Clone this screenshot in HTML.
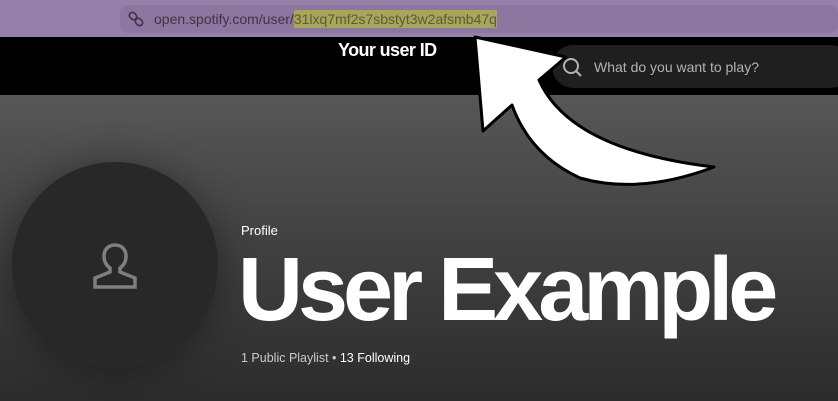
<!DOCTYPE html>
<html><head><style>
body{margin:0;width:838px;height:401px;overflow:hidden;font-family:"Liberation Sans",sans-serif;position:relative;background:#2a2a2a}
.top{position:absolute;left:0;top:0;width:838px;height:37px;background:#9780a9}
.url{position:absolute;left:120px;top:5px;width:718px;height:28px;background:#8d76a0;border-radius:8px}
.urltxt{position:absolute;left:154px;top:11px;font-size:14px;color:#3e3446;white-space:nowrap;letter-spacing:0}
.hl{background:#a8a65a;color:#5b5a3a;padding:1px 0}
.black{position:absolute;left:0;top:37px;width:838px;height:58px;background:#000}
.main{position:absolute;left:0;top:95px;width:838px;height:306px;background:linear-gradient(#575757,#3c3c3c 60%,#2c2c2c)}
.search{position:absolute;left:552px;top:45px;width:300px;height:43px;background:#1f1f1f;border-radius:22px}
.stxt{position:absolute;left:594px;top:59px;font-size:14px;color:#b3b3b3}
.uid{position:absolute;left:338px;top:40px;font-size:18px;font-weight:bold;color:#fff;letter-spacing:-0.6px}
.av{position:absolute;left:12px;top:162px;width:206px;height:206px;border-radius:50%;background:#282828;box-shadow:0 4px 40px rgba(0,0,0,.4)}
.prof{position:absolute;left:241px;top:223px;font-size:13px;color:#fff}
.name{position:absolute;left:238px;top:240px;font-size:90px;font-weight:bold;color:#fff;letter-spacing:-5px;line-height:100px}
.meta{position:absolute;left:241px;top:351px;font-size:12.5px;color:#ccc;letter-spacing:0}
</style></head><body>
<div class="top"><div class="url"></div></div>
<svg style="position:absolute;left:127px;top:10px" width="18" height="18" viewBox="0 0 18 18" fill="none" stroke="#3e3446" stroke-width="1.6"><rect x="2" y="3" width="8" height="6" rx="3" transform="rotate(45 6 6)"/><rect x="8" y="9" width="8" height="6" rx="3" transform="rotate(45 12 12)"/></svg>
<div class="urltxt">open.spotify.com/user/<span class="hl">31lxq7mf2s7sbstyt3w2afsmb47q</span></div>
<div class="black"></div>
<div class="main"></div>
<div class="search"></div>
<svg style="position:absolute;left:560px;top:56px" width="24" height="24" viewBox="0 0 24 24" fill="none" stroke="#b3b3b3" stroke-width="2"><circle cx="11" cy="10" r="7"/><path d="M16 15l5 5"/></svg>
<div class="stxt">What do you want to play?</div>
<div class="uid">Your user ID</div>
<svg style="position:absolute;left:0;top:0" width="838" height="401"><path d="M475,37 L566,57 L539,80 Q570,150 714,167 Q640,195 580,178 Q530,155 512,105 L483,131 Z" fill="#fff" stroke="#000" stroke-width="3" stroke-linejoin="round"/></svg>
<div class="av"></div>
<svg style="position:absolute;left:90px;top:240px" width="50" height="50" viewBox="0 0 50 50" fill="none" stroke="#7f7f7f" stroke-width="3.5"><path d="M25 5c-7 0-11 5-11 11s3 10 6 12v4L5 38v9h40v-9l-15-6v-4c3-2 6-6 6-12S32 5 25 5z"/></svg>
<div class="prof">Profile</div>
<div class="name">User Example</div>
<div class="meta">1 Public Playlist • <span style="color:#fff">13 Following</span></div>
</body></html>
